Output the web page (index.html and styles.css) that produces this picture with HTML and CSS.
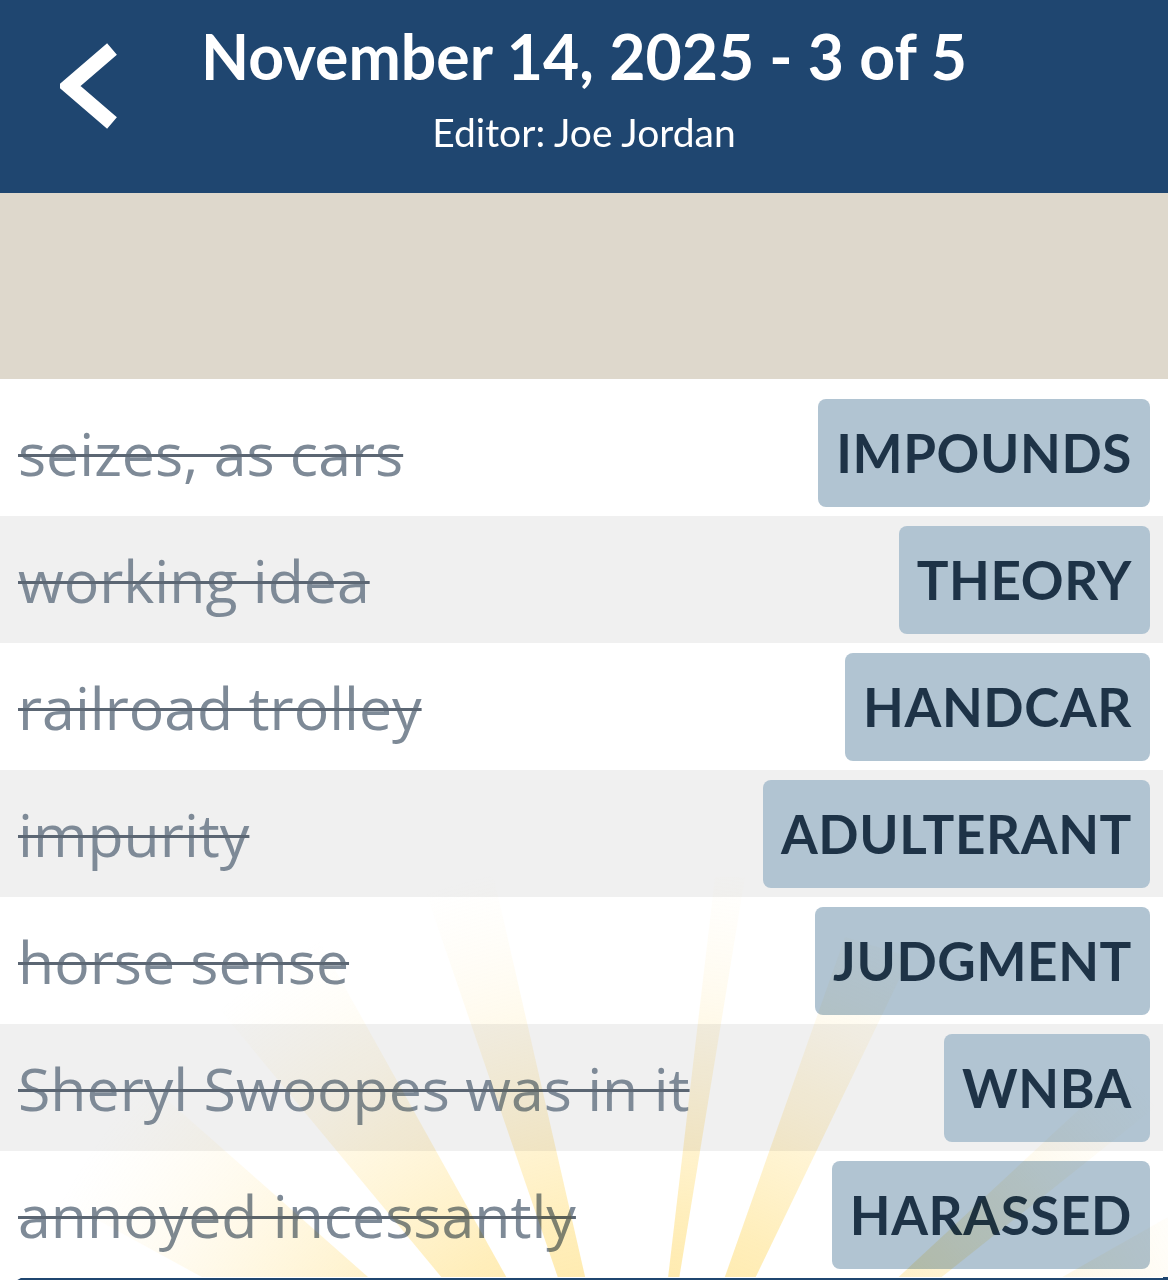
FILE: index.html
```html
<!DOCTYPE html>
<html lang="en">
<head>
<meta charset="utf-8">
<title>November 14, 2025 - 3 of 5</title>
<link rel="stylesheet" href="styles.css">
</head>
<body>
<div class="app">
  <header class="header">
    <div class="back">
      <svg class="back-icon" viewBox="0 0 60 90" width="60" height="90" aria-hidden="true">
        <polyline points="52,7 9,44 52,81" fill="none" stroke="#ffffff" stroke-width="15" stroke-linejoin="miter" stroke-linecap="butt"/>
      </svg>
    </div>
    <div class="titles">
      <h1 class="title">November 14, 2025 - 3 of 5</h1>
      <p class="subtitle">Editor: Joe Jordan</p>
    </div>
    <div class="spacer"></div>
  </header>

  <div class="band"></div>

  <main class="list">
    <div class="row"><span class="clue">seizes, as cars</span><span class="tile">IMPOUNDS</span></div>
    <div class="row alt"><span class="clue">working idea</span><span class="tile">THEORY</span></div>
    <div class="row"><span class="clue">railroad trolley</span><span class="tile">HANDCAR</span></div>
    <div class="row alt"><span class="clue">impurity</span><span class="tile">ADULTERANT</span></div>
    <div class="row"><span class="clue">horse sense</span><span class="tile">JUDGMENT</span></div>
    <div class="row alt"><span class="clue">Sheryl Swoopes was in it</span><span class="tile">WNBA</span></div>
    <div class="row"><span class="clue">annoyed incessantly</span><span class="tile">HARASSED</span></div>

    <svg class="rays" viewBox="0 0 1168 420" preserveAspectRatio="none" aria-hidden="true">
      <defs>
        <radialGradient id="fade" cx="640" cy="660" r="660" gradientUnits="userSpaceOnUse">
          <stop offset="0" stop-color="#ffd55a" stop-opacity="0.75"/>
          <stop offset="0.45" stop-color="#ffd966" stop-opacity="0.45"/>
          <stop offset="0.8" stop-color="#ffe08a" stop-opacity="0.14"/>
          <stop offset="1" stop-color="#ffe9b0" stop-opacity="0"/>
        </radialGradient>
      </defs>
      <g fill="url(#fade)">
        <polygon points="640,660 -260,330 -260,500"/>
        <polygon points="640,660 -40,60 -200,200"/>
        <polygon points="640,660 250,-40 110,20"/>
        <polygon points="640,660 480,-40 400,-40"/>
        <polygon points="640,660 745,20 715,20"/>
        <polygon points="640,660 910,100 845,80"/>
        <polygon points="640,660 1168,240 1168,170"/>
        <polygon points="640,660 1168,430 1168,360"/>
      </g>
    </svg>
  </main>

  <div class="bottom-bar"></div>
</div>
</body>
</html>
```

FILE: styles.css
```css
* {
  box-sizing: border-box;
}

html, body {
  margin: 0;
  padding: 0;
}

body {
  width: 1168px;
  height: 1280px;
  overflow: hidden;
  background: #ffffff;
  font-family: "Lato", "Open Sans", sans-serif;
}

.app {
  display: flex;
  flex-direction: column;
  width: 1168px;
}

.header {
  display: grid;
  grid-template-columns: 1fr auto 1fr;
  align-items: start;
  height: 193px;
  background: #1f4670;
  color: #ffffff;
}

.back {
  padding: 42px 0 0 60px;
}

.back-icon {
  display: block;
}

.titles {
  display: flex;
  flex-direction: column;
  align-items: center;
  padding-top: 20px;
}

.title {
  margin: 0;
  font-family: "Lato", sans-serif;
  font-weight: 700;
  font-size: 62.5px;
  line-height: 72px;
  white-space: nowrap;
}

.subtitle {
  margin: 17px 0 0;
  font-family: "Lato", sans-serif;
  font-weight: 400;
  font-size: 39px;
  line-height: 46px;
  white-space: nowrap;
}

.band {
  height: 186px;
  background: #ded8cc;
}

.list {
  position: relative;
  padding-top: 10px;
  height: 898px;
}

.row {
  display: flex;
  align-items: center;
  justify-content: space-between;
  height: 127px;
  margin-right: 5px;
  padding: 10px 13px 9px 18px;
  background: #ffffff;
}

.row.alt {
  background: #f0f0f0;
}

.clue {
  font-family: "Open Sans", sans-serif;
  font-size: 59px;
  line-height: 1;
  color: #7e8a97;
  text-decoration: line-through;
  text-decoration-color: #5b6673;
  text-decoration-thickness: 3px;
  white-space: nowrap;
}

.tile {
  height: 108px;
  padding: 0 18px;
  border-radius: 8px;
  background: #b1c4d2;
  color: #1e3347;
  font-family: "Lato", sans-serif;
  font-weight: 700;
  font-size: 53px;
  line-height: 108px;
  letter-spacing: 0.6px;
  white-space: nowrap;
}

.rays {
  position: absolute;
  left: 0;
  bottom: 0;
  width: 1168px;
  height: 420px;
  pointer-events: none;
  mix-blend-mode: multiply;
}

.bottom-bar {
  height: 60px;
  margin-left: 12px;
  border-top-left-radius: 14px;
  background: #1f4670;
}
```
